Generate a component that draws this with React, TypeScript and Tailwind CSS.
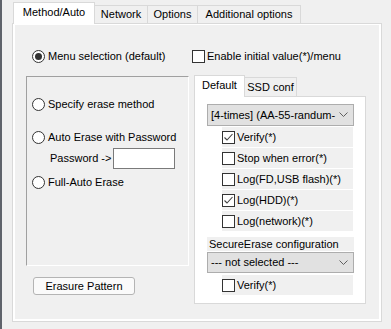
import React from "react";

const FONT = { fontFamily: '"Liberation Sans", Arial, sans-serif' };

function Radio({ checked = false }: { checked?: boolean }) {
  return (
    <div className="w-[13px] h-[13px] rounded-full border border-[#333333] bg-white flex items-center justify-center shrink-0">
      {checked && <div className="w-[7px] h-[7px] rounded-full bg-[#333333]" />}
    </div>
  );
}

function Check({ checked = false }: { checked?: boolean }) {
  return (
    <div className="w-[13px] h-[13px] border border-[#333333] bg-white shrink-0 flex items-center justify-center">
      {checked && (
        <svg width="11" height="11" viewBox="0 0 11 11">
          <polyline points="1.5,5.5 4,8 9.5,2" fill="none" stroke="#404040" strokeWidth="1.1" />
        </svg>
      )}
    </div>
  );
}

function Chevron() {
  return (
    <svg width="9" height="6" viewBox="0 0 9 6" className="shrink-0">
      <polyline points="0.5,0.5 4.5,4.5 8.5,0.5" fill="none" stroke="#606060" strokeWidth="1" />
    </svg>
  );
}

function Select({ text, h }: { text: string; h: string }) {
  return (
    <div className={`ml-[12px] w-[147px] ${h} bg-[#e1e1e1] border border-[#adadad] flex items-center pl-[3px] pr-[5px]`}>
      <div className="flex-1 whitespace-nowrap text-[11px] leading-none">{text}</div>
      <Chevron />
    </div>
  );
}

function CheckRow({ label, checked = false }: { label: string; checked?: boolean }) {
  return (
    <div className="ml-[27px] w-[131px] h-[20px] bg-[#f0f0f0] flex items-center gap-[2px]">
      <Check checked={checked} />
      <span className="text-[11px] leading-none whitespace-nowrap">{label}</span>
    </div>
  );
}

export default function App() {
  return (
    <div className="w-[391px] h-[329px] bg-[#f0f0f0] flex overflow-hidden text-black" style={FONT}>
      <div className="w-[2px] h-full bg-[#5f636b]" />
      <div className="ml-[10px] flex flex-col">
        {/* tab bar */}
        <div className="h-[23px] flex items-end whitespace-nowrap">
          <div className="ml-[1px] w-[82px] h-[22px] -mb-[1px] relative z-10 bg-white border-l border-t border-r border-[#d9d9d9] flex items-center justify-center text-[11px] leading-none pb-[2px]">
            Method/Auto
          </div>
          <div className="w-[53px] h-[18px] border-t border-r border-[#d9d9d9] flex items-center justify-center text-[11px] leading-none">
            Network
          </div>
          <div className="w-[50px] h-[18px] border-t border-r border-[#d9d9d9] flex items-center justify-center text-[11px] leading-none">
            Options
          </div>
          <div className="w-[103px] h-[18px] border-t border-r border-[#d9d9d9] flex items-center justify-center text-[11px] leading-none">
            Additional options
          </div>
        </div>
        {/* main panel */}
        <div className="w-[370px] h-[299px] border border-[#d9d9d9] bg-white">
          <div className="w-full h-full border-2 border-t border-white bg-[#f0f0f0] flex flex-col">
            {/* row 1 */}
            <div className="mt-[24px] h-[14px] flex items-center">
              <div className="ml-[17px] flex items-center gap-[3px] w-[160px]">
                <Radio checked />
                <span className="text-[11px] leading-none whitespace-nowrap">Menu selection (default)</span>
              </div>
              <div className="flex items-center gap-[2px]">
                <Check />
                <span className="text-[11px] leading-none whitespace-nowrap">Enable initial value(*)/menu</span>
              </div>
            </div>
            {/* row 2 */}
            <div className="mt-[12px] flex">
              {/* left column */}
              <div className="ml-[11px] flex flex-col">
                <div className="mt-[1px] w-[163px] h-[190px] border-l border-t border-[#a0a0a0] border-r border-b border-r-white border-b-white flex flex-col">
                  <div className="mt-[20px] h-[14px] ml-[5px] flex items-center gap-[3px]">
                    <Radio />
                    <span className="text-[11px] leading-none whitespace-nowrap">Specify erase method</span>
                  </div>
                  <div className="mt-[19px] h-[14px] ml-[5px] flex items-center gap-[3px]">
                    <Radio />
                    <span className="text-[11px] leading-none whitespace-nowrap">Auto Erase with Password</span>
                  </div>
                  <div className="mt-[4px] h-[21px] ml-[23px] flex items-center">
                    <span className="w-[63px] text-[11px] leading-none whitespace-nowrap">Password -&gt;</span>
                    <div className="w-[62px] h-[21px] bg-white border border-[#7a7a7a]" />
                  </div>
                  <div className="mt-[6px] h-[14px] ml-[5px] flex items-center gap-[3px]">
                    <Radio />
                    <span className="text-[11px] leading-none whitespace-nowrap">Full-Auto Erase</span>
                  </div>
                </div>
                <div className="mt-[11px] ml-[7px] w-[102px] h-[18px] bg-[#fafafa] border border-[#b4b4b4] rounded-[3px] flex items-center justify-center text-[11px] leading-none">
                  Erasure Pattern
                </div>
              </div>
              {/* right column */}
              <div className="ml-[5px] flex flex-col">
                <div className="h-[21px] flex items-end whitespace-nowrap">
                  <div className="w-[51px] h-[22px] -mb-[1px] relative z-10 bg-white border-l border-t border-r border-[#d9d9d9] flex items-center justify-center text-[11px] leading-none pb-[2px]">
                    Default
                  </div>
                  <div className="w-[52px] h-[19px] border-t border-r border-[#d9d9d9] flex items-center justify-center text-[11px] leading-none">
                    SSD conf
                  </div>
                </div>
                <div className="w-[172px] h-[208px] bg-white border border-[#d9d9d9] flex flex-col">
                  <div className="mt-[7px]">
                    <Select text="[4-times] (AA-55-randum-" h="h-[22px]" />
                  </div>
                  <div className="mt-[1px] flex flex-col gap-[1px]">
                    <CheckRow label="Verify(*)" checked />
                    <CheckRow label="Stop when error(*)" />
                    <CheckRow label="Log(FD,USB flash)(*)" />
                    <CheckRow label="Log(HDD)(*)" checked />
                    <CheckRow label="Log(network)(*)" />
                  </div>
                  <div className="mt-[6px] ml-[12px] w-[147px] h-[14px] bg-[#f0f0f0] flex items-center pl-[2px] text-[11px] leading-none whitespace-nowrap">
                    SecureErase configuration
                  </div>
                  <div className="mt-[1px]">
                    <Select text="--- not selected ---" h="h-[21px]" />
                  </div>
                  <div className="mt-[2px]">
                    <CheckRow label="Verify(*)" />
                  </div>
                </div>
              </div>
            </div>
          </div>
        </div>
      </div>
    </div>
  );
}
